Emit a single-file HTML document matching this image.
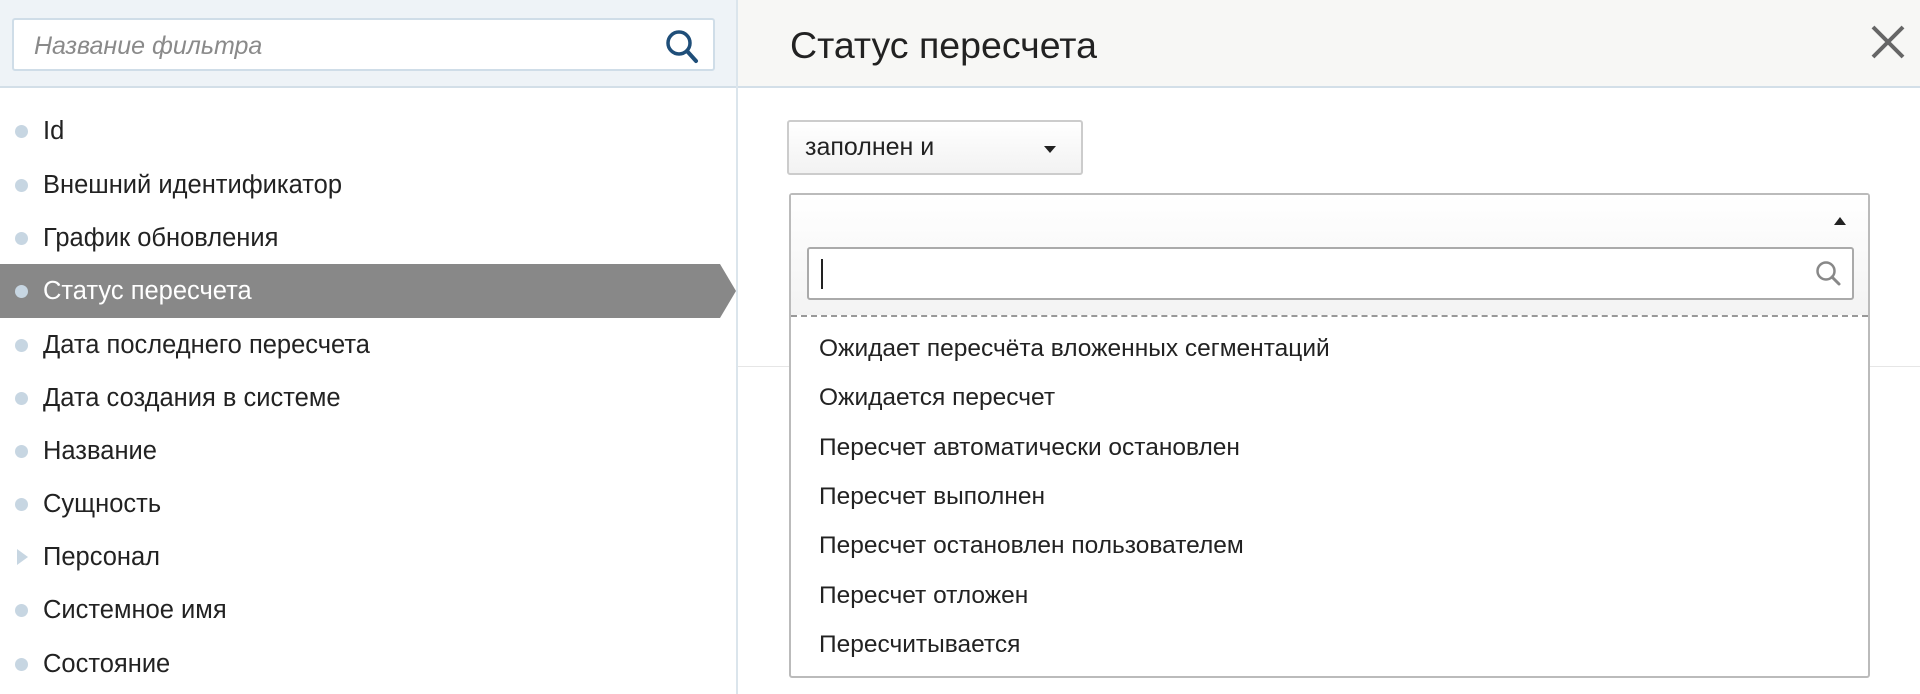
<!DOCTYPE html>
<html><head><meta charset="utf-8"><style>
*{box-sizing:border-box;margin:0;padding:0}
body{width:1920px;height:694px;overflow:hidden;background:#fff;font-family:"Liberation Sans",sans-serif;color:#333;position:relative}
.lh{position:absolute;left:0;top:0;width:736px;height:88px;background:#eef3f7;border-bottom:2px solid #d3dfe8}
.sb{position:absolute;left:12px;top:18px;width:703px;height:53px;background:#fff;border:2px solid #cfdde8;border-radius:3px}
.sb span{position:absolute;left:20px;top:12px;font-size:25px;font-style:italic;color:#8a8a8a}
.vd{position:absolute;left:736px;top:0;width:2px;height:694px;background:#dbe5ec}
.rh{position:absolute;left:738px;top:0;width:1182px;height:88px;background:#f7f7f5;border-bottom:2px solid #d3dfe8}
.title{position:absolute;left:790px;top:24px;font-size:37.5px;color:#222}
.row{position:absolute;left:0;width:736px;height:54px;font-size:25.5px;line-height:54px;padding-left:43px;color:#222}
.row:before{content:"";position:absolute;left:15px;top:21px;width:13px;height:13px;border-radius:50%;background:#c7d6e2}
.row.tri:before{border-radius:0;background:none;width:0;height:0;border-left:11px solid #c7d6e2;border-top:8px solid transparent;border-bottom:8px solid transparent;top:19px;left:17px}
.sel{background:#888;color:#fff;width:720px}
.sel:after{content:"";position:absolute;right:-16px;top:0;border-left:16px solid #888;border-top:27px solid transparent;border-bottom:27px solid transparent}
.dd{position:absolute;left:787px;top:120px;width:296px;height:55px;border:2px solid #ccc;border-radius:3px;background:linear-gradient(#fff,#f2f2f2);font-size:25px;line-height:51px;padding-left:16px;color:#222}
.car{position:absolute;width:0;height:0;border-left:6px solid transparent;border-right:6px solid transparent}
.fl{position:absolute;left:738px;top:366px;width:1182px;height:1px;background:#e6e6e6}
.ms{position:absolute;left:789px;top:193px;width:1081px;height:485px;border:2px solid #bbb;border-radius:3px;background:#fff}
.mh{position:absolute;left:0;top:0;width:100%;height:122px;background:linear-gradient(#fff,#f3f3f3);border-bottom:2px dashed #999}
.si{position:absolute;left:16px;top:52px;width:1047px;height:53px;border:2px solid #aaa;border-radius:3px;background:#fff}
.si i{position:absolute;left:12px;top:10px;width:2px;height:30px;background:#222}
.it{position:absolute;left:28px;font-size:24.5px;color:#222}
</style></head><body>
<div class="lh"><div class="sb"><span>Название фильтра</span>
<svg style="position:absolute;right:10px;top:8px" width="40" height="38" viewBox="0 0 40 38"><circle cx="16" cy="15" r="11" fill="none" stroke="#1f4e79" stroke-width="3.5"/><line x1="24" y1="23" x2="33" y2="33" stroke="#1f4e79" stroke-width="4" stroke-linecap="round"/></svg></div></div>
<div class="vd"></div>
<div class="rh"></div>
<div class="title">Статус пересчета</div>
<svg style="position:absolute;left:1870px;top:24px" width="36" height="36" viewBox="0 0 36 36"><path d="M3 3L33 33M33 3L3 33" stroke="#666" stroke-width="4"/></svg>
<div class="row" style="top:104px">Id</div>
<div class="row" style="top:158px">Внешний идентификатор</div>
<div class="row" style="top:211px">График обновления</div>
<div class="row sel" style="top:264px">Статус пересчета</div>
<div class="row" style="top:318px">Дата последнего пересчета</div>
<div class="row" style="top:371px">Дата создания в системе</div>
<div class="row" style="top:424px">Название</div>
<div class="row" style="top:477px">Сущность</div>
<div class="row tri" style="top:530px">Персонал</div>
<div class="row" style="top:583px">Системное имя</div>
<div class="row" style="top:637px">Состояние</div>
<div class="fl"></div>
<div class="dd">заполнен и<div class="car" style="left:255px;top:24px;border-top:7px solid #222"></div></div>
<div class="ms"><div class="mh"><div class="car" style="left:1043px;top:22px;border-bottom:8px solid #222"></div>
<div class="si"><i></i><svg style="position:absolute;right:8px;top:10px" width="30" height="30" viewBox="0 0 30 30"><circle cx="12" cy="12" r="8.5" fill="none" stroke="#888" stroke-width="2.5"/><line x1="18" y1="18" x2="25" y2="25" stroke="#888" stroke-width="3" stroke-linecap="round"/></svg></div></div>
<div class="it" style="top:140px">Ожидает пересчёта вложенных сегментаций</div>
<div class="it" style="top:189px">Ожидается пересчет</div>
<div class="it" style="top:239px">Пересчет автоматически остановлен</div>
<div class="it" style="top:288px">Пересчет выполнен</div>
<div class="it" style="top:337px">Пересчет остановлен пользователем</div>
<div class="it" style="top:387px">Пересчет отложен</div>
<div class="it" style="top:436px">Пересчитывается</div>
</div>
</body></html>
